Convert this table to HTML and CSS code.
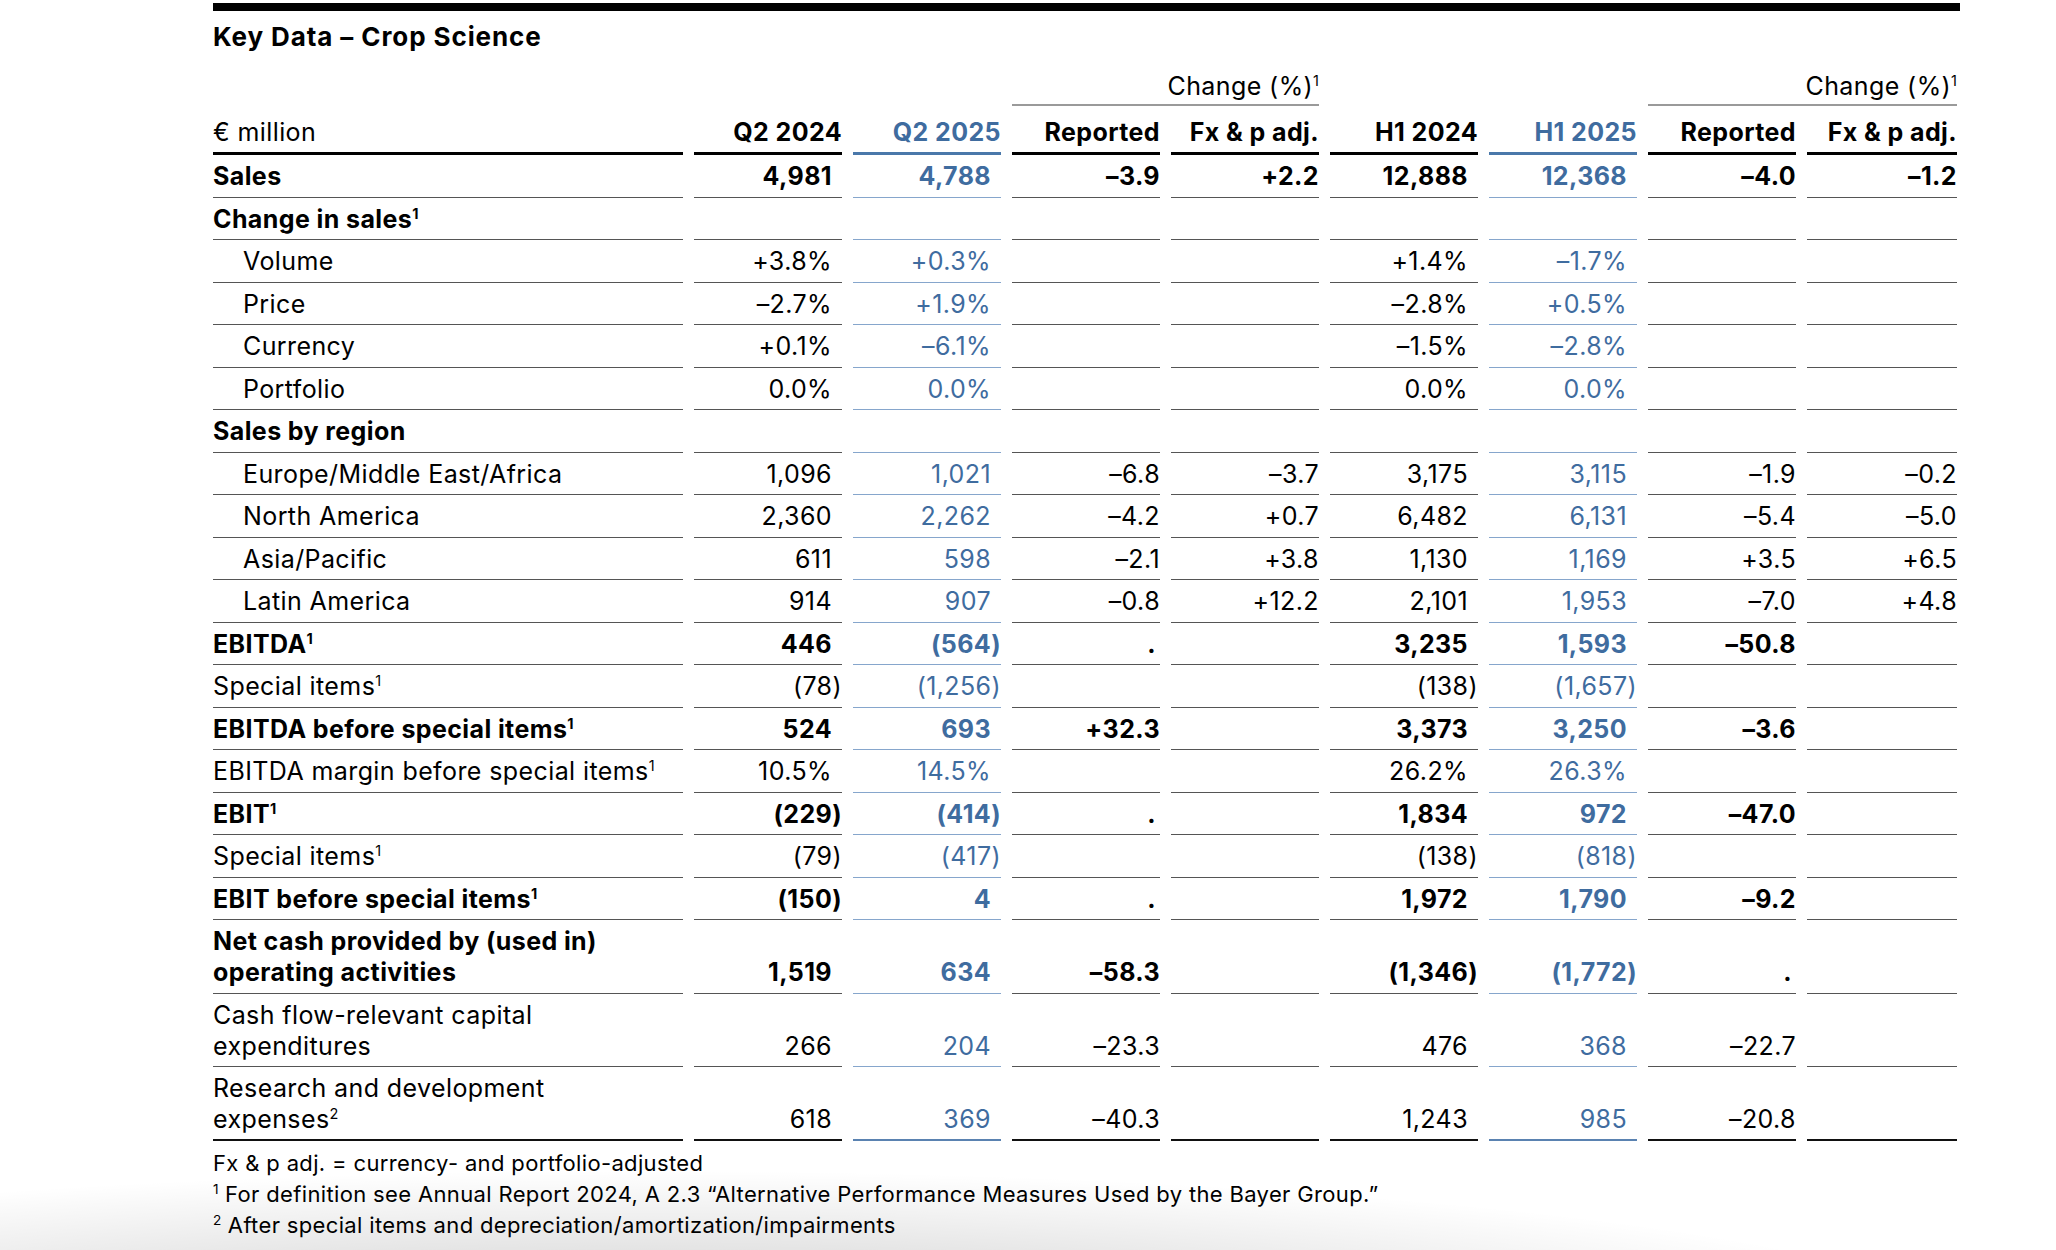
FILE: index.html
```html
<!DOCTYPE html>
<html lang="en">
<head>
<meta charset="utf-8">
<title>Key Data – Crop Science</title>
<link rel="stylesheet" href="styles.css">
</head>
<body>
<div class="page">
  <div class="topbar"></div>
  <h1 class="title">Key Data – Crop Science</h1>

  <div class="table">
    <div class="row subhead">
      <div class="e"></div><div class="e"></div><div class="e"></div>
      <div class="change">Change (%)<sup>1</sup></div>
      <div class="e"></div><div class="e"></div>
      <div class="change">Change (%)<sup>1</sup></div>
    </div>
    <div class="row head">
      <div class="h lab">€ million</div>
      <div class="h">Q2 2024</div>
      <div class="h blue">Q2 2025</div>
      <div class="h">Reported</div>
      <div class="h">Fx &amp; p adj.</div>
      <div class="h">H1 2024</div>
      <div class="h blue">H1 2025</div>
      <div class="h">Reported</div>
      <div class="h">Fx &amp; p adj.</div>
    </div>

    <div class="row bold">
      <div class="c lab">Sales</div>
      <div class="c v"><span>4,981</span></div>
      <div class="c v blue"><span>4,788</span></div>
      <div class="c ch"><span>–3.9</span></div>
      <div class="c ch"><span>+2.2</span></div>
      <div class="c v"><span>12,888</span></div>
      <div class="c v blue"><span>12,368</span></div>
      <div class="c ch"><span>–4.0</span></div>
      <div class="c ch"><span>–1.2</span></div>
    </div>

    <div class="row">
      <div class="c lab bold">Change in sales<sup>1</sup></div>
      <div class="c v"></div><div class="c v blue"></div><div class="c ch"></div><div class="c ch"></div>
      <div class="c v"></div><div class="c v blue"></div><div class="c ch"></div><div class="c ch"></div>
    </div>

    <div class="row">
      <div class="c lab ind">Volume</div>
      <div class="c v"><span>+3.8%</span></div>
      <div class="c v blue"><span>+0.3%</span></div>
      <div class="c ch"></div><div class="c ch"></div>
      <div class="c v"><span>+1.4%</span></div>
      <div class="c v blue"><span>–1.7%</span></div>
      <div class="c ch"></div><div class="c ch"></div>
    </div>

    <div class="row">
      <div class="c lab ind">Price</div>
      <div class="c v"><span>–2.7%</span></div>
      <div class="c v blue"><span>+1.9%</span></div>
      <div class="c ch"></div><div class="c ch"></div>
      <div class="c v"><span>–2.8%</span></div>
      <div class="c v blue"><span>+0.5%</span></div>
      <div class="c ch"></div><div class="c ch"></div>
    </div>

    <div class="row">
      <div class="c lab ind">Currency</div>
      <div class="c v"><span>+0.1%</span></div>
      <div class="c v blue"><span>–6.1%</span></div>
      <div class="c ch"></div><div class="c ch"></div>
      <div class="c v"><span>–1.5%</span></div>
      <div class="c v blue"><span>–2.8%</span></div>
      <div class="c ch"></div><div class="c ch"></div>
    </div>

    <div class="row">
      <div class="c lab ind">Portfolio</div>
      <div class="c v"><span>0.0%</span></div>
      <div class="c v blue"><span>0.0%</span></div>
      <div class="c ch"></div><div class="c ch"></div>
      <div class="c v"><span>0.0%</span></div>
      <div class="c v blue"><span>0.0%</span></div>
      <div class="c ch"></div><div class="c ch"></div>
    </div>

    <div class="row">
      <div class="c lab bold">Sales by region</div>
      <div class="c v"></div><div class="c v blue"></div><div class="c ch"></div><div class="c ch"></div>
      <div class="c v"></div><div class="c v blue"></div><div class="c ch"></div><div class="c ch"></div>
    </div>

    <div class="row">
      <div class="c lab ind">Europe/Middle East/Africa</div>
      <div class="c v"><span>1,096</span></div>
      <div class="c v blue"><span>1,021</span></div>
      <div class="c ch"><span>–6.8</span></div>
      <div class="c ch"><span>–3.7</span></div>
      <div class="c v"><span>3,175</span></div>
      <div class="c v blue"><span>3,115</span></div>
      <div class="c ch"><span>–1.9</span></div>
      <div class="c ch"><span>–0.2</span></div>
    </div>

    <div class="row">
      <div class="c lab ind">North America</div>
      <div class="c v"><span>2,360</span></div>
      <div class="c v blue"><span>2,262</span></div>
      <div class="c ch"><span>–4.2</span></div>
      <div class="c ch"><span>+0.7</span></div>
      <div class="c v"><span>6,482</span></div>
      <div class="c v blue"><span>6,131</span></div>
      <div class="c ch"><span>–5.4</span></div>
      <div class="c ch"><span>–5.0</span></div>
    </div>

    <div class="row">
      <div class="c lab ind">Asia/Pacific</div>
      <div class="c v"><span>611</span></div>
      <div class="c v blue"><span>598</span></div>
      <div class="c ch"><span>–2.1</span></div>
      <div class="c ch"><span>+3.8</span></div>
      <div class="c v"><span>1,130</span></div>
      <div class="c v blue"><span>1,169</span></div>
      <div class="c ch"><span>+3.5</span></div>
      <div class="c ch"><span>+6.5</span></div>
    </div>

    <div class="row">
      <div class="c lab ind">Latin America</div>
      <div class="c v"><span>914</span></div>
      <div class="c v blue"><span>907</span></div>
      <div class="c ch"><span>–0.8</span></div>
      <div class="c ch"><span>+12.2</span></div>
      <div class="c v"><span>2,101</span></div>
      <div class="c v blue"><span>1,953</span></div>
      <div class="c ch"><span>–7.0</span></div>
      <div class="c ch"><span>+4.8</span></div>
    </div>

    <div class="row bold">
      <div class="c lab">EBITDA<sup>1</sup></div>
      <div class="c v"><span>446</span></div>
      <div class="c v blue"><span>(564<span class="rp">)</span></span></div>
      <div class="c ch dot"><span>.</span></div>
      <div class="c ch"></div>
      <div class="c v"><span>3,235</span></div>
      <div class="c v blue"><span>1,593</span></div>
      <div class="c ch"><span>–50.8</span></div>
      <div class="c ch"></div>
    </div>

    <div class="row">
      <div class="c lab">Special items<sup>1</sup></div>
      <div class="c v"><span>(78<span class="rp">)</span></span></div>
      <div class="c v blue"><span>(1,256<span class="rp">)</span></span></div>
      <div class="c ch"></div><div class="c ch"></div>
      <div class="c v"><span>(138<span class="rp">)</span></span></div>
      <div class="c v blue"><span>(1,657<span class="rp">)</span></span></div>
      <div class="c ch"></div><div class="c ch"></div>
    </div>

    <div class="row bold">
      <div class="c lab">EBITDA before special items<sup>1</sup></div>
      <div class="c v"><span>524</span></div>
      <div class="c v blue"><span>693</span></div>
      <div class="c ch"><span>+32.3</span></div>
      <div class="c ch"></div>
      <div class="c v"><span>3,373</span></div>
      <div class="c v blue"><span>3,250</span></div>
      <div class="c ch"><span>–3.6</span></div>
      <div class="c ch"></div>
    </div>

    <div class="row">
      <div class="c lab">EBITDA margin before special items<sup>1</sup></div>
      <div class="c v"><span>10.5%</span></div>
      <div class="c v blue"><span>14.5%</span></div>
      <div class="c ch"></div><div class="c ch"></div>
      <div class="c v"><span>26.2%</span></div>
      <div class="c v blue"><span>26.3%</span></div>
      <div class="c ch"></div><div class="c ch"></div>
    </div>

    <div class="row bold">
      <div class="c lab">EBIT<sup>1</sup></div>
      <div class="c v"><span>(229<span class="rp">)</span></span></div>
      <div class="c v blue"><span>(414<span class="rp">)</span></span></div>
      <div class="c ch dot"><span>.</span></div>
      <div class="c ch"></div>
      <div class="c v"><span>1,834</span></div>
      <div class="c v blue"><span>972</span></div>
      <div class="c ch"><span>–47.0</span></div>
      <div class="c ch"></div>
    </div>

    <div class="row">
      <div class="c lab">Special items<sup>1</sup></div>
      <div class="c v"><span>(79<span class="rp">)</span></span></div>
      <div class="c v blue"><span>(417<span class="rp">)</span></span></div>
      <div class="c ch"></div><div class="c ch"></div>
      <div class="c v"><span>(138<span class="rp">)</span></span></div>
      <div class="c v blue"><span>(818<span class="rp">)</span></span></div>
      <div class="c ch"></div><div class="c ch"></div>
    </div>

    <div class="row bold">
      <div class="c lab">EBIT before special items<sup>1</sup></div>
      <div class="c v"><span>(150<span class="rp">)</span></span></div>
      <div class="c v blue"><span>4</span></div>
      <div class="c ch dot"><span>.</span></div>
      <div class="c ch"></div>
      <div class="c v"><span>1,972</span></div>
      <div class="c v blue"><span>1,790</span></div>
      <div class="c ch"><span>–9.2</span></div>
      <div class="c ch"></div>
    </div>

    <div class="row bold">
      <div class="c lab">Net cash provided by (used in)<br>operating activities</div>
      <div class="c v"><span>1,519</span></div>
      <div class="c v blue"><span>634</span></div>
      <div class="c ch"><span>–58.3</span></div>
      <div class="c ch"></div>
      <div class="c v"><span>(1,346<span class="rp">)</span></span></div>
      <div class="c v blue"><span>(1,772<span class="rp">)</span></span></div>
      <div class="c ch dot"><span>.</span></div>
      <div class="c ch"></div>
    </div>

    <div class="row">
      <div class="c lab">Cash flow-relevant capital<br>expenditures</div>
      <div class="c v"><span>266</span></div>
      <div class="c v blue"><span>204</span></div>
      <div class="c ch"><span>–23.3</span></div>
      <div class="c ch"></div>
      <div class="c v"><span>476</span></div>
      <div class="c v blue"><span>368</span></div>
      <div class="c ch"><span>–22.7</span></div>
      <div class="c ch"></div>
    </div>

    <div class="row last">
      <div class="c lab">Research and development<br>expenses<sup>2</sup></div>
      <div class="c v"><span>618</span></div>
      <div class="c v blue"><span>369</span></div>
      <div class="c ch"><span>–40.3</span></div>
      <div class="c ch"></div>
      <div class="c v"><span>1,243</span></div>
      <div class="c v blue"><span>985</span></div>
      <div class="c ch"><span>–20.8</span></div>
      <div class="c ch"></div>
    </div>
  </div>

  <div class="notes">
    <p>Fx &amp; p adj. = currency- and portfolio-adjusted</p>
    <p><sup>1</sup> For definition see Annual Report 2024, A 2.3 “Alternative Performance Measures Used by the Bayer Group.”</p>
    <p><sup>2</sup> After special items and depreciation/amortization/impairments</p>
  </div>
</div>
</body>
</html>
```
FILE: styles.css
```css
html, body {
  margin: 0;
  padding: 0;
}
body {
  height: 1250px;
  overflow: hidden;
  background: #fff radial-gradient(ellipse 1350px 170px at 650px 1340px, rgba(0,0,0,0.2) 0%, rgba(0,0,0,0.1) 55%, rgba(0,0,0,0) 100%);
  font-family: Inter, Lato, "Noto Sans", sans-serif;
  color: #000;
}
.page {
  padding-left: 213px;
  width: 1747px;
}
.topbar {
  margin-top: 3px;
  height: 8px;
  background: #000;
}
.title {
  margin: 10px 0 0;
  font-size: 26px;
  line-height: 31px;
  font-weight: 700;
  letter-spacing: 0.9px;
}
.table {
  margin-top: 19px;
  font-size: 25px;
  letter-spacing: 0.4px;
}
.row {
  display: grid;
  grid-template-columns: 470px repeat(7, 148px) 150px;
  column-gap: 11px;
}
sup {
  font-size: 0.58em;
  line-height: 0;
  vertical-align: 0.62em;
  letter-spacing: 0;
}
.change {
  grid-column: span 2;
  text-align: right;
  line-height: 31px;
  padding: 0 0 2px;
  border-bottom: 2px solid #9a9a9a;
}
.h {
  padding: 11px 0 4px;
  line-height: 31px;
  border-bottom: 3px solid #000;
  text-align: right;
  font-weight: 700;
  white-space: nowrap;
}
.h.lab {
  text-align: left;
  font-weight: 400;
}
.h.blue {
  color: #3f6c9f;
  border-bottom-color: #4a78aa;
}
.c {
  padding: 6px 0 4.5px;
  line-height: 31px;
  border-bottom: 1px solid #555;
  display: flex;
  align-items: flex-end;
  justify-content: flex-end;
  white-space: nowrap;
}
.c.lab {
  display: block;
  text-align: left;
}
.c.ind {
  padding-left: 30px;
}
.bold {
  font-weight: 700;
}
.v {
  padding-right: 10px;
}
.ch {
  padding-right: 0;
}
.dot {
  padding-right: 4px;
}
.rp {
  margin-right: -10px;
}
.c.blue {
  color: #3f6c9f;
  border-bottom-color: #86a6cc;
}
.last .c {
  border-bottom: 2px solid #111;
  padding-bottom: 4px;
}
.last .c.blue {
  border-bottom-color: #5a82b1;
}
.notes {
  margin-top: 7px;
  font-size: 22px;
  line-height: 31px;
  letter-spacing: 0.35px;
}
.notes p {
  margin: 0;
}
.notes sup {
  font-size: 0.62em;
}
```
